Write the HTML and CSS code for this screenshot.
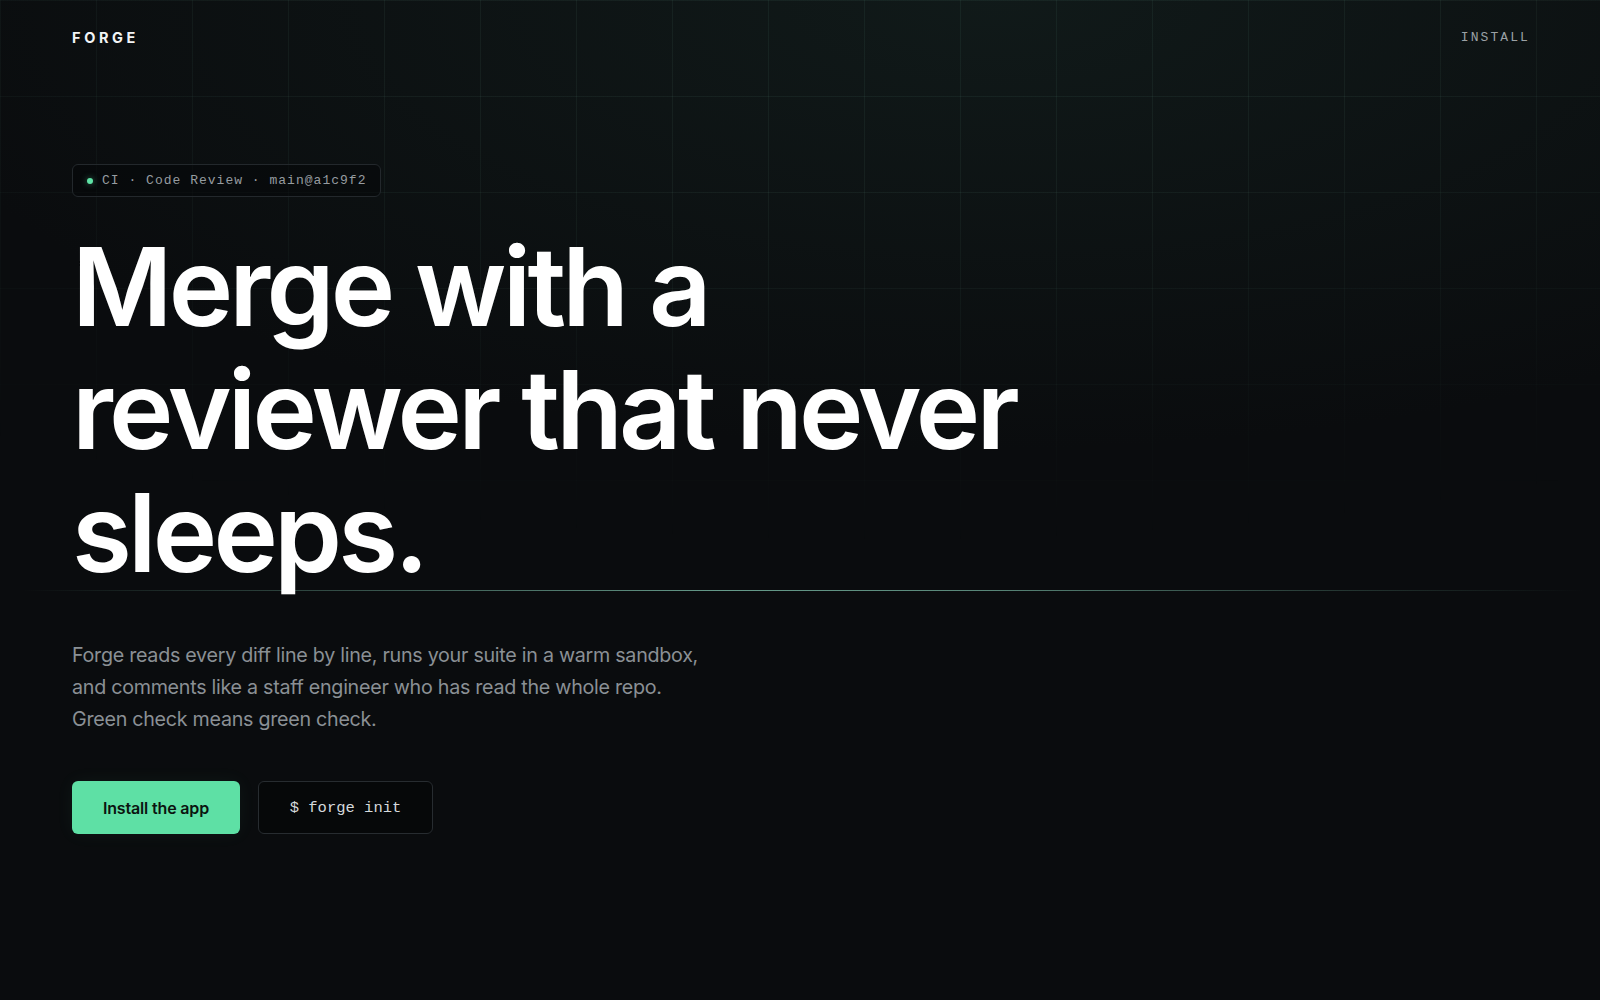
FILE: index.html
```html
<!DOCTYPE html>
<html lang="en">
<head>
<meta charset="utf-8">
<title>Forge</title>
<link rel="stylesheet" href="styles.css">
</head>
<body>
<div class="grid-bg"></div>
<header class="nav">
  <div class="logo">FORGE</div>
  <a class="nav-link" href="#">INSTALL</a>
</header>
<main class="hero">
  <div class="hero-inner">
    <div class="badge"><span class="dot"></span><span class="badge-text">CI · Code Review · main@a1c9f2</span></div>
    <h1 class="headline">Merge with a<br>reviewer that never<br>sleeps.</h1>
  </div>
  <div class="divider"></div>
  <div class="hero-inner">
    <p class="lede">Forge reads every diff line by line, runs your suite in a warm sandbox,<br>and comments like a staff engineer who has read the whole repo.<br>Green check means green check.</p>
    <div class="actions">
      <a class="btn btn-primary" href="#">Install the app</a>
      <a class="btn btn-mono" href="#">$ forge init</a>
    </div>
  </div>
</main>
</body>
</html>
```

FILE: styles.css
```css
* { box-sizing: border-box; }
html, body { margin: 0; padding: 0; }
body {
  min-height: 1000px;
  background:
    radial-gradient(ellipse 70% 45% at 62% 0%, rgba(26, 46, 42, 0.4), rgba(10, 12, 14, 0) 100%),
    #0a0c0e;
  color: #fff;
  font-family: Inter, "Noto Sans", sans-serif;
  position: relative;
  overflow: hidden;
}
.grid-bg {
  position: absolute;
  inset: 0;
  pointer-events: none;
  background-image:
    linear-gradient(to right, rgba(130, 200, 175, 0.07) 1px, transparent 1px),
    linear-gradient(to bottom, rgba(130, 200, 175, 0.07) 1px, transparent 1px);
  background-size: 96px 96px;
  -webkit-mask-image: radial-gradient(ellipse 95% 55% at 55% 0%, #000 35%, transparent 100%);
  mask-image: radial-gradient(ellipse 95% 55% at 55% 0%, #000 35%, transparent 100%);
}
.nav {
  position: relative;
  display: flex;
  justify-content: space-between;
  align-items: flex-start;
  padding: 28px 72px 0 72px;
  height: 76px;
}
.logo {
  font-family: Inter, sans-serif;
  font-weight: 700;
  font-size: 14.5px;
  line-height: 20px;
  letter-spacing: 0.25em;
  color: #f2f4f5;
}
.nav-link {
  font-family: "Liberation Mono", "DejaVu Sans Mono", monospace;
  font-size: 13px;
  line-height: 20px;
  letter-spacing: 0.16em;
  color: #9ba1a5;
  text-decoration: none;
  margin-right: -2px;
}
.hero { position: relative; }
.hero-inner { padding: 0 72px; }
.badge {
  display: inline-flex;
  align-items: center;
  gap: 9px;
  height: 33px;
  margin-top: 88px;
  padding: 0 14px;
  border: 1px solid #23282c;
  border-radius: 6px;
  background: rgba(6, 8, 9, 0.55);
}
.dot {
  width: 6px;
  height: 6px;
  border-radius: 50%;
  background: #5fe3a6;
  box-shadow: 0 0 6px rgba(95, 227, 166, 0.5);
}
.badge-text {
  font-family: "Liberation Mono", "DejaVu Sans Mono", monospace;
  font-size: 13px;
  letter-spacing: 0.078em;
  color: #969ca0;
}
.headline {
  margin: 28px 0 0 0;
  font-family: Inter, sans-serif;
  font-weight: 600;
  font-size: 109px;
  line-height: 123px;
  letter-spacing: -0.035em;
  color: #ffffff;
}
.divider {
  height: 1px;
  margin: -4px 16px 0 22px;
  background: linear-gradient(90deg,
    rgba(120, 190, 165, 0) 0%,
    rgba(120, 190, 165, 0.22) 12%,
    rgba(140, 215, 190, 0.7) 45%,
    rgba(140, 215, 190, 0.6) 62%,
    rgba(120, 190, 165, 0.22) 85%,
    rgba(120, 190, 165, 0) 100%);
}
.lede {
  margin: 48px 0 0 0;
  font-size: 19.7px;
  line-height: 32px;
  color: #8a9095;
  letter-spacing: -0.014em;
}
.actions {
  display: flex;
  gap: 18px;
  margin-top: 46px;
}
.btn {
  display: inline-flex;
  align-items: center;
  justify-content: center;
  height: 53px;
  border-radius: 6px;
  text-decoration: none;
}
.btn-primary {
  width: 168px;
  background: #5ee0a5;
  color: #0b1410;
  font-weight: 600;
  font-size: 16px;
  letter-spacing: -0.01em;
  box-shadow: 0 0 18px rgba(94, 224, 165, 0.06);
}
.btn-mono {
  width: 175px;
  border: 1px solid #272c30;
  background: #060809;
  color: #d5d9dc;
  font-family: "Liberation Mono", "DejaVu Sans Mono", monospace;
  font-size: 15.5px;
}
```
